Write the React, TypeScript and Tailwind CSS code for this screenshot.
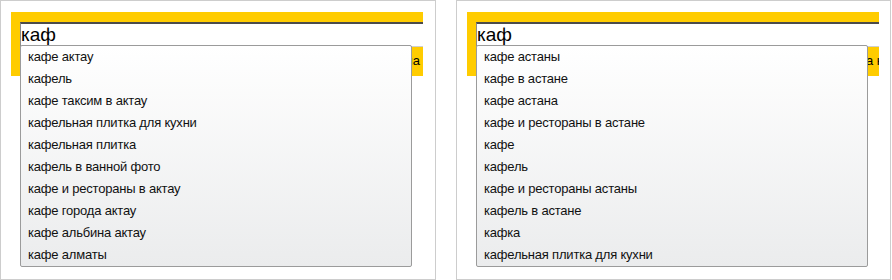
import React from "react";

const leftItems = [
  "кафе актау",
  "кафель",
  "кафе таксим в актау",
  "кафельная плитка для кухни",
  "кафельная плитка",
  "кафель в ванной фото",
  "кафе и рестораны в актау",
  "кафе города актау",
  "кафе альбина актау",
  "кафе алматы",
];

const rightItems = [
  "кафе астаны",
  "кафе в астане",
  "кафе астана",
  "кафе и рестораны в астане",
  "кафе",
  "кафель",
  "кафе и рестораны астаны",
  "кафель в астане",
  "кафка",
  "кафельная плитка для кухни",
];

type PanelProps = {
  items: string[];
  width: string;
  note: string;
  noteClass: string;
};

const Panel: React.FC<PanelProps> = ({ items, width, note, noteClass }) => {
  return (
    <div className={`${width} h-[280px] shrink-0 border border-[#cdcdcd] bg-white pl-[10px] pt-[11px]`}>
      <div className="relative w-[412px] h-[64px] bg-[#ffcc00] pl-[9px] pt-[10px] overflow-visible">
        <div className="h-[25px] bg-white border-t-2 border-t-[#4b4b4b] border-l border-l-[#8c8c8c] border-b border-b-[#cfcfcf] text-[19px] leading-[22px] text-black overflow-hidden">
          каф
        </div>
        <div className={`flex h-[28px] items-center overflow-hidden whitespace-nowrap text-[13px] leading-[28px] text-black ${noteClass}`}>
          <span>{note}</span>
        </div>

        {/* suggest dropdown */}
        <div className="absolute left-[9px] top-[33px] w-[392px] border border-[#9b9b9b] rounded-[2px] bg-gradient-to-b from-white to-[#ebeced]">
          {items.map((item, i) => (
            <div key={i} className="h-[22px] pl-[7px] text-[13px] leading-[22px] tracking-[-0.2px] text-[#111] whitespace-nowrap">
              {item}
            </div>
          ))}
        </div>
      </div>
    </div>
  );
};

export default function App() {
  return (
    <div
      className="flex w-[892px] h-[280px] bg-white gap-[20px] overflow-hidden"
      style={{ fontFamily: '"Liberation Sans", Arial, sans-serif' }}
    >
      <Panel items={leftItems} width="w-[436px]" note="Найдено в Актау и Алматы, кафе Астана" noteClass="justify-end pr-[3px]" />
      <Panel items={rightItems} width="w-[435px]" note="а н" noteClass="justify-start pl-[390px]" />
    </div>
  );
}
